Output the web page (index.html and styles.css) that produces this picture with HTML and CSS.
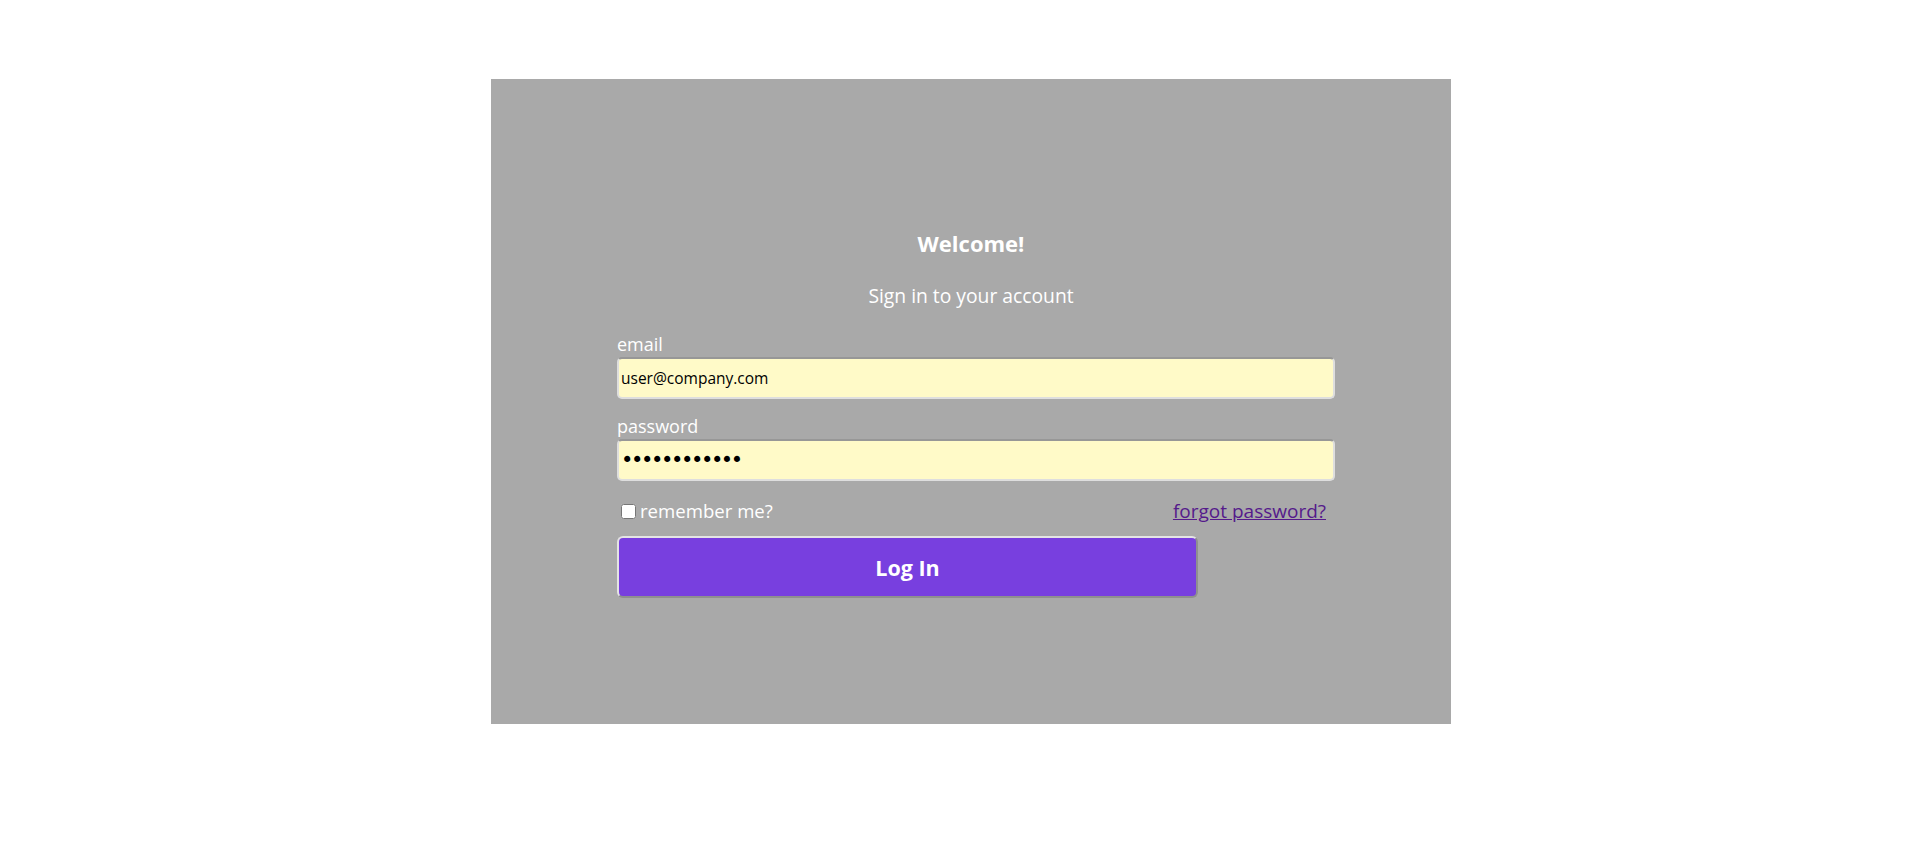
FILE: index.html
```html
<!DOCTYPE html>
<html lang="en">
<head>
<meta charset="utf-8">
<title>Sign in</title>
<link rel="stylesheet" href="styles.css">
</head>
<body>
<div class="page">
  <div class="card">
    <h1 class="title">Welcome!</h1>
    <p class="subtitle">Sign in to your account</p>
    <form class="form">
      <div class="field">
        <label class="label" for="email">email</label>
        <input class="input" id="email" type="text" value="user@company.com">
      </div>
      <div class="field">
        <label class="label" for="password">password</label>
        <input class="input input-pass" id="password" type="password" value="abcdefghijkl">
      </div>
      <div class="options">
        <label class="remember"><input class="check" type="checkbox">remember me?</label>
        <a class="forgot" href="#">forgot password?</a>
      </div>
      <button class="btn" type="button">Log In</button>
    </form>
  </div>
</div>
</body>
</html>
```
FILE: styles.css
```css
html, body {
  margin: 0;
  padding: 0;
  background: #ffffff;
}
body {
  font-family: "Open Sans", "Noto Sans", sans-serif;
}
.page {
  padding: 79px 0 0 491px;
}
.card {
  width: 960px;
  height: 645px;
  background: #a9a9a9;
  box-sizing: border-box;
  padding-top: 149px;
  color: #ffffff;
}
.title {
  margin: 0;
  text-align: center;
  font-size: 22px;
  font-weight: 700;
  line-height: 30px;
}
.subtitle {
  margin: 26px 0 0;
  text-align: center;
  font-size: 19.3px;
  line-height: 24px;
}
.form {
  margin: 24px 0 0 126px;
  width: 718px;
}
.field {
  margin-bottom: 15px;
}
.label {
  display: block;
  font-size: 18px;
  line-height: 24px;
}
.input {
  display: block;
  box-sizing: border-box;
  width: 718px;
  height: 42px;
  margin-top: 1px;
  padding: 0 2px;
  background: #fffac8;
  border: 2px solid #dedede;
  border-top-color: #979797;
  border-radius: 5px;
  font-family: "Open Sans", "Noto Sans", sans-serif;
  font-size: 15.5px;
  color: #000000;
  outline: none;
}
.input-pass {
  font-family: "DejaVu Sans", sans-serif;
  font-size: 21px;
  letter-spacing: -2.4px;
}
.options {
  display: flex;
  justify-content: space-between;
  align-items: center;
  margin-top: 18px;
  padding-right: 9px;
  height: 24px;
}
.remember {
  display: flex;
  align-items: center;
  font-size: 18.6px;
  line-height: 24px;
}
.check {
  width: 15px;
  height: 15px;
  margin: 0 4px 0 4px;
}
.forgot {
  font-size: 19px;
  line-height: 24px;
  color: #551a8b;
}
.btn {
  display: block;
  box-sizing: border-box;
  width: 581px;
  height: 62px;
  margin-top: 13px;
  background: #783fdf;
  border: 2px solid #8f8f8f;
  border-top-color: #e4e4e4;
  border-left-color: #e4e4e4;
  border-radius: 6px;
  color: #ffffff;
  font-family: "Open Sans", "Noto Sans", sans-serif;
  font-size: 21.5px;
  font-weight: 700;
}
```
